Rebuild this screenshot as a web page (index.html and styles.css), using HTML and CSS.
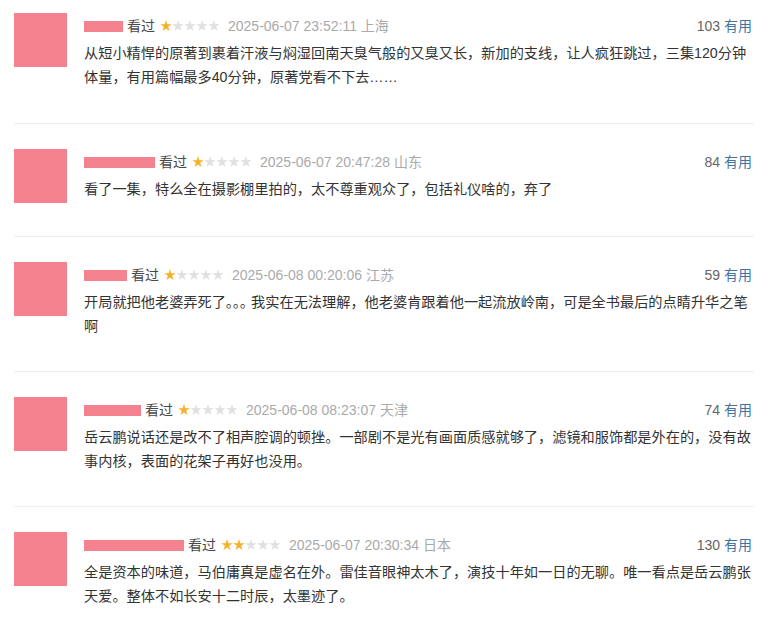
FILE: index.html
```html
<!DOCTYPE html>
<html lang="zh-CN">

<head>
    <meta charset="UTF-8">
    <meta name="viewport" content="width=device-width, initial-scale=1.0">
    <title>短评</title>

    <link rel="stylesheet" href="styles.css">

</head>

<body>
    <div class="comments">

        <div class="comment first">
            <div class="avatar"></div>
            <div class="main">
                <div class="info">
                    <span class="name" style="width: 39px;"></span>
                    <span class="watched">看过</span>
                    <span class="stars"><i class="star on"></i><i class="star"></i><i class="star"></i><i class="star"></i><i class="star"></i></span>
                    <span class="time">2025-06-07 23:52:11 上海</span>
                    <span class="votes"><span class="count">103</span> <a class="useful">有用</a></span>
                </div>
                <p class="text">从短小精悍的原著到裹着汗液与焖湿回南天臭气般的又臭又长，新加的支线，让人疯狂跳过，三集120分钟体量，有用篇幅最多40分钟，原著党看不下去……</p>
            </div>
        </div>

        <div class="comment">
            <div class="avatar"></div>
            <div class="main">
                <div class="info">
                    <span class="name" style="width: 71px;"></span>
                    <span class="watched">看过</span>
                    <span class="stars"><i class="star on"></i><i class="star"></i><i class="star"></i><i class="star"></i><i class="star"></i></span>
                    <span class="time">2025-06-07 20:47:28 山东</span>
                    <span class="votes"><span class="count">84</span> <a class="useful">有用</a></span>
                </div>
                <p class="text">看了一集，特么全在摄影棚里拍的，太不尊重观众了，包括礼仪啥的，弃了</p>
            </div>
        </div>

        <div class="comment">
            <div class="avatar"></div>
            <div class="main">
                <div class="info">
                    <span class="name" style="width: 43px;"></span>
                    <span class="watched">看过</span>
                    <span class="stars"><i class="star on"></i><i class="star"></i><i class="star"></i><i class="star"></i><i class="star"></i></span>
                    <span class="time">2025-06-08 00:20:06 江苏</span>
                    <span class="votes"><span class="count">59</span> <a class="useful">有用</a></span>
                </div>
                <p class="text">开局就把他老婆弄死了｡｡｡ 我实在无法理解，他老婆肯跟着他一起流放岭南，可是全书最后的点睛升华之笔啊</p>
            </div>
        </div>

        <div class="comment">
            <div class="avatar"></div>
            <div class="main">
                <div class="info">
                    <span class="name" style="width: 57px;"></span>
                    <span class="watched">看过</span>
                    <span class="stars"><i class="star on"></i><i class="star"></i><i class="star"></i><i class="star"></i><i class="star"></i></span>
                    <span class="time">2025-06-08 08:23:07 天津</span>
                    <span class="votes"><span class="count">74</span> <a class="useful">有用</a></span>
                </div>
                <p class="text">岳云鹏说话还是改不了相声腔调的顿挫。一部剧不是光有画面质感就够了，滤镜和服饰都是外在的，没有故事内核，表面的花架子再好也没用。</p>
            </div>
        </div>

        <div class="comment">
            <div class="avatar"></div>
            <div class="main">
                <div class="info">
                    <span class="name" style="width: 100px;"></span>
                    <span class="watched">看过</span>
                    <span class="stars"><i class="star on"></i><i class="star on"></i><i class="star"></i><i class="star"></i><i class="star"></i></span>
                    <span class="time">2025-06-07 20:30:34 日本</span>
                    <span class="votes"><span class="count">130</span> <a class="useful">有用</a></span>
                </div>
                <p class="text">全是资本的味道，马伯庸真是虚名在外。雷佳音眼神太木了，演技十年如一日的无聊。唯一看点是岳云鹏张天爱。整体不如长安十二时辰，太墨迹了。</p>
            </div>
        </div>

    </div>
</body>

</html>
```

FILE: styles.css
```css
body {
    margin: 0;
    background: #fff;
    font-family: "Liberation Sans", "Noto Sans CJK SC", sans-serif;
    color: #333;
}

.comments {
    padding-left: 14px;
}

.comment {
    display: flex;
    gap: 17px;
    width: 740px;
    padding: 28px 0 33px;
    border-bottom: 1px solid #efefef;
}

.comment.first {
    padding-top: 16px;
    padding-bottom: 34px;
}

.comment:last-child {
    border-bottom: none;
}

.avatar {
    flex: none;
    width: 53px;
    height: 54px;
    margin-top: -3px;
    background: #f5838f;
}

.main {
    flex: 1;
    min-width: 0;
}

.info {
    display: flex;
    align-items: center;
    height: 20px;
    font-size: 14px;
    line-height: 20px;
}

.name {
    display: inline-block;
    height: 11px;
    margin-right: 4px;
    background: #f5838f;
}

.watched {
    color: #494949;
    margin-right: 5px;
}

.stars {
    display: flex;
    margin-right: 8px;
}

.star {
    display: block;
    width: 12px;
    height: 12px;
    background: #e0e0e0;
    clip-path: polygon(50% 0%, 61% 35%, 98% 35%, 68% 57%, 79% 91%, 50% 70%, 21% 91%, 32% 57%, 2% 35%, 39% 35%);
}

.star.on {
    background: #f5b12a;
}

.time {
    color: #aaa;
}

.votes {
    margin-left: auto;
    padding-right: 2px;
}

.count {
    color: #666;
}

.useful {
    color: #3f74a3;
}

.text {
    margin: 5px 0 0;
    font-size: 14.2px;
    line-height: 24px;
    color: #333;
}
```
